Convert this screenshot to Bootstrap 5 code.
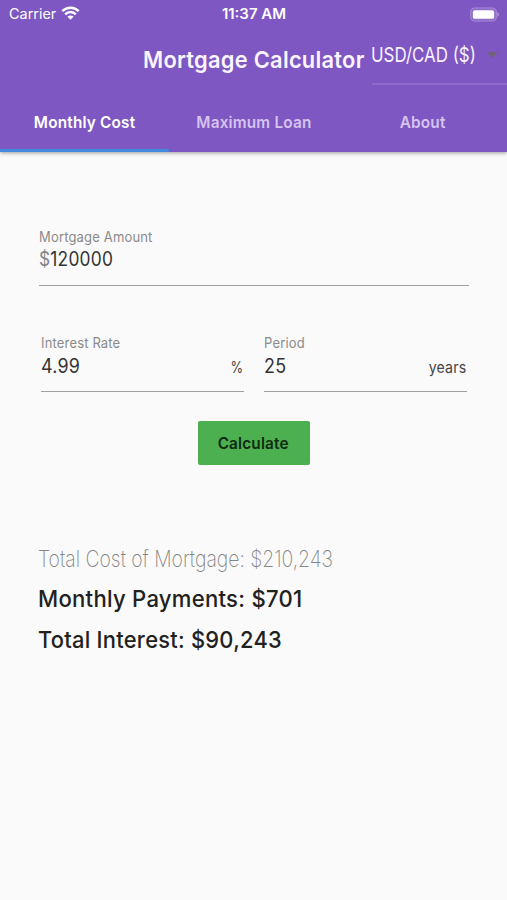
<!DOCTYPE html>
<html lang="en">
<head>
<meta charset="utf-8">
<meta name="viewport" content="width=device-width, initial-scale=1">
<title>Mortgage Calculator</title>
<link href="https://cdn.jsdelivr.net/npm/bootstrap@5.3.0/dist/css/bootstrap.min.css" rel="stylesheet">
<style>
body{font-family:Inter,Roboto,sans-serif;background:#fafafa;color:#212121;height:900px;overflow:hidden}
/* slightly condensed lettering */
.tx{display:inline-block;white-space:nowrap;letter-spacing:.012em;transform:scaleX(var(--sx,.93));transform-origin:left center}
.tx-c{transform-origin:center}
.tx-r{transform-origin:right center}
.app-head{background:#7e57c2;color:#fff;height:152px;box-shadow:0 1px 4px rgba(0,0,0,.38)}
.status{height:28px;font-size:14px;line-height:28px;padding:0 8px 0 9px}
.status .tx{letter-spacing:0}
.status-side{width:90px}
.wifi{margin:0 0 2px 6.5px}
.title-bar{height:64px;padding-left:142.5px}
.title-text{font-size:23.5px;font-weight:600;line-height:64px;width:229px;color:#faf4ff}
.currency{width:135.5px;height:56.5px;border-bottom:2px solid #8e6dcb;font-size:20px;line-height:55px;color:#f8f0ff;--sx:.845}
.currency .tx{width:106px;margin-left:-.5px;letter-spacing:0}
.currency svg{margin:24px 9px 0 0}
.tabs{height:60px;font-size:16.5px;font-weight:600;line-height:60px}
.tab-item{color:#d6c3f0;border-radius:0;height:60px;border-bottom:3px solid transparent;padding:0;line-height:60px}
.tab-item.active{color:#fff;border-color:#4189e0}
.main-area{padding:74px 38.5px 0}
.field{border-bottom:1px solid #a0a0a0;height:60px}
.field-label{font-size:14px;line-height:22px;color:#8a8a8a}
.field-value{font-size:19.5px;line-height:23px;color:#333;--sx:.89}
.field-unit{font-size:15.5px;line-height:26px;color:#444;--sx:.91}
.pair{margin:46px 2px 0 2.5px;gap:20px}
.pair .field-value{--sx:.92}
.pair .field-label{line-height:22.5px}
.btn-calc{margin-top:29px;width:112px;height:44px;padding:0;background:#4caf50;color:#0f2b10;border:0;border-radius:2px;font-size:16px;font-weight:600;line-height:44px;--sx:.955}
.btn-calc:hover{background:#43a047}
.results{margin:74px 0 0 -1px;font-size:23.5px;font-weight:500;line-height:41px;--sx:.94}
.result-soft{font-size:22.5px;font-weight:200;color:#858585;line-height:39px;--sx:.86}
.result-soft .tx{letter-spacing:0}
</style>
</head>
<body>
<header class="app-head position-relative">
  <div class="status d-flex justify-content-between">
    <div class="status-side d-flex align-items-center">
      <span class="tx" style="--sx:1.03">Carrier</span>
      <svg class="wifi" width="19" height="14" viewBox="0 0 20 15" fill="none" stroke="#fff" stroke-width="2.7"><path d="M1.2 5.6a12.4 12.4 0 0 1 17.600 0M4.300 8.900a8 8 0 0 1 11.400 0"/><path d="M10 14.800 6.700 11.500a4.600 4.600 0 0 1 6.600 0Z" fill="#fff" stroke="none"/></svg>
    </div>
    <span class="tx tx-c fw-semibold" style="--sx:1.07">11:37 AM</span>
    <div class="status-side d-flex align-items-center justify-content-end">
      <svg width="29" height="15" viewBox="0 0 30 15"><rect x=".7" y=".7" width="26.600" height="13.600" rx="4.200" fill="#8f6dcb" stroke="#a78bd6" stroke-width="1"/><rect x="3" y="3" width="22" height="9" rx="2" fill="#fff"/><path d="M28.300 5v5q1.600-.8 1.600-2.500T28.300 5Z" fill="#b39adc"/></svg>
    </div>
  </div>
  <div class="title-bar d-flex">
    <h1 class="title-text m-0"><span class="tx">Mortgage Calculator</span></h1>
    <div class="currency d-flex justify-content-between">
      <span class="tx">USD/CAD ($)</span>
      <svg width="11" height="6" viewBox="0 0 11 6" class="flex-shrink-0"><path d="M0 0h11L5.500 6Z" fill="#6f6378"/></svg>
    </div>
  </div>
  <nav class="tabs row g-0 text-center">
    <a class="tab-item col active text-decoration-none" href="#"><span class="tx tx-c">Monthly Cost</span></a>
    <a class="tab-item col text-decoration-none" href="#"><span class="tx tx-c">Maximum Loan</span></a>
    <a class="tab-item col text-decoration-none" href="#"><span class="tx tx-c">About</span></a>
  </nav>
</header>
<main class="main-area">
  <div class="field">
    <div class="field-label"><span class="tx">Mortgage Amount</span></div>
    <div class="field-value"><span class="tx"><span style="color:#858585">$</span>120000</span></div>
  </div>
  <div class="pair d-flex">
    <div class="field flex-fill w-50">
      <div class="field-label"><span class="tx">Interest Rate</span></div>
      <div class="d-flex justify-content-between"><span class="field-value tx">4.99</span><span class="field-unit tx tx-r" style="--sx:.83">%</span></div>
    </div>
    <div class="field flex-fill w-50">
      <div class="field-label"><span class="tx">Period</span></div>
      <div class="d-flex justify-content-between"><span class="field-value tx">25</span><span class="field-unit tx tx-r">years</span></div>
    </div>
  </div>
  <div class="text-center"><button type="button" class="btn btn-calc"><span class="tx tx-c">Calculate</span></button></div>
  <div class="results">
    <div class="result-soft"><span class="tx">Total Cost of Mortgage: $210,243</span></div>
    <div><span class="tx">Monthly Payments: $701</span></div>
    <div><span class="tx" style="--sx:.93">Total Interest: $90,243</span></div>
  </div>
</main>
<script src="https://cdn.jsdelivr.net/npm/bootstrap@5.3.0/dist/js/bootstrap.bundle.min.js"></script>
</body>
</html>
